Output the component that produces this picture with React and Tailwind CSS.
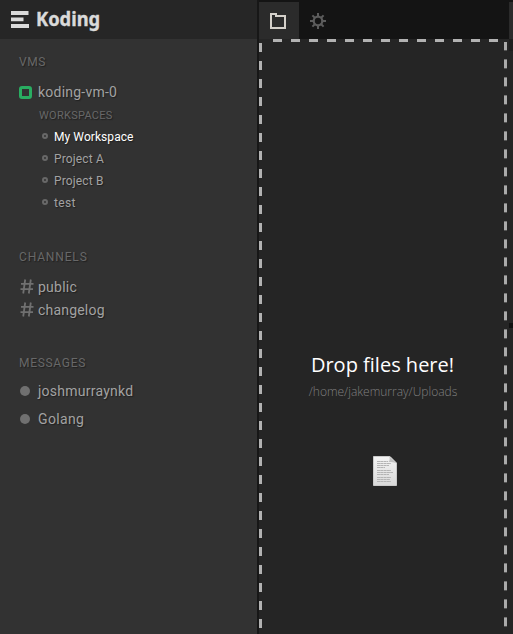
function Heading({ children, className }) {
  return (
    <h2 className={`h-4 whitespace-nowrap pl-[19px] text-[12px] leading-4 text-[#686868] ${className}`}>
      {children}
    </h2>
  );
}

function Workspace({ name, active, tracking }) {
  return (
    <li className="flex h-[22px] items-center pl-[42px]">
      <span className="mb-0.5 size-1.5 shrink-0 rounded-full border-2 border-[#686868]" />
      <span className={`ml-1.5 whitespace-nowrap text-[12px] leading-4 ${tracking} ${active ? "text-white" : "text-[#a2a2a2]"}`}>
        {name}
      </span>
    </li>
  );
}

function Hash() {
  return (
    <svg width="14" height="15" viewBox="0 0 14 15" fill="none" stroke="#707070" strokeWidth="1.8">
      <path d="M5.2.5 3.2 14.5M10.8.5l-2 14M1 4.9h12.5M.5 10.1H13" />
    </svg>
  );
}

function Channel({ name, tracking }) {
  return (
    <li className="flex h-[23px] items-center pl-5">
      <Hash />
      <span className={`ml-1 whitespace-nowrap text-[14px] leading-5 ${tracking}`}>{name}</span>
    </li>
  );
}

function Message({ name, tracking }) {
  return (
    <li className="flex h-7 items-center pl-5">
      <span className="size-2.5 shrink-0 rounded-full bg-[#707070]" />
      <span className={`ml-2 whitespace-nowrap text-[14px] leading-5 ${tracking}`}>{name}</span>
    </li>
  );
}

function Sidebar() {
  return (
    <aside className="flex w-[257px] shrink-0 flex-col bg-[#323232] text-[#a2a2a2] [text-shadow:1px_1px_1px_#202020]">
      <header className="flex h-[39px] shrink-0 bg-[#262626] pl-[11px] text-[#dadada] [text-shadow:none]">
        <svg className="mt-[11px]" width="18" height="17" fill="#dadada">
          <path d="M0 0h17.500v4H0zM0 6.500h12.500v3.700H0zM0 13h18v4H0z" />
        </svg>
        <span className="ml-[7px] mt-[5px] origin-left scale-x-[.915] whitespace-nowrap font-['Noto_Sans',sans-serif] text-[20px] font-bold leading-7 [-webkit-text-stroke:.4px_#dadada]">
          Koding
        </span>
      </header>

      <Heading className="mt-[15px] tracking-[.6px]">VMS</Heading>
      <div className="mt-3 flex h-5 items-center pl-[19px]">
        <span className="size-[13px] shrink-0 rounded-[3px] border-3 border-[#29ad61]" />
        <span className="ml-1.5 whitespace-nowrap text-[14px] leading-5 tracking-[.22px]">koding-vm-0</span>
      </div>
      <h3 className="mt-[6px] h-4 whitespace-nowrap pl-[39px] text-[11px] leading-4 tracking-[.28px] text-[#686868]">WORKSPACES</h3>
      <ul className="mt-[2px]">
        <Workspace name="My Workspace" active tracking="tracking-[.07px]" />
        <Workspace name="Project A" tracking="tracking-[.15px]" />
        <Workspace name="Project B" tracking="tracking-[.15px]" />
        <Workspace name="test" tracking="tracking-[.3px]" />
      </ul>

      <Heading className="mt-[35px] tracking-[.85px]">CHANNELS</Heading>
      <ul className="mt-2.5">
        <Channel name="public" tracking="tracking-[.25px]" />
        <Channel name="changelog" tracking="tracking-[.2px]" />
      </ul>

      <Heading className="mt-[34px] tracking-[.7px]">MESSAGES</Heading>
      <ul className="mt-1.5">
        <Message name="joshmurraynkd" tracking="tracking-[.25px]" />
        <Message name="Golang" tracking="tracking-[.35px]" />
      </ul>
    </aside>
  );
}

function Gear() {
  return (
    <svg width="16" height="16" viewBox="0 0 16 16" fill="none" stroke="#5c5c5c" strokeWidth="2">
      <circle cx="8" cy="8" r="4.300" strokeWidth="2.300" />
      <path d="M8 0v3M8 13v3M0 8h3M13 8h3M2.400 2.400l2.400 2.400M11.200 11.200l2.400 2.400M13.600 2.400l-2.400 2.400M4.800 11.200l-2.400 2.400" />
    </svg>
  );
}

function Document() {
  return (
    <svg width="26" height="32" viewBox="0 0 26 32">
      <defs>
        <linearGradient id="paper" x1="0" y1="0" x2="0" y2="1">
          <stop stopColor="#f4f4f4" />
          <stop offset="1" stopColor="#d9d9d9" />
        </linearGradient>
      </defs>
      <path d="M1.500 1.500H18l6.500 6.500v22.500h-23z" fill="url(#paper)" stroke="#cacaca" />
      <path d="M17 1.500c1 2 1 4-.5 5.500 3 .2 6 0 8 1.500z" fill="#c2c2c2" />
      <path d="M5 6.500h11M5 8.500h14M5 10.500h12M5 12.500h8M5 15.500h14M5 17.500h16M5 19.500h12M5 22.500h14M5 24.500h13M5 26.500h14" stroke="#b4b4b4" strokeDasharray="3 .3" />
    </svg>
  );
}

function FilePanel() {
  return (
    <main className="flex w-[250px] shrink-0 flex-col bg-[#252525]">
      <nav className="flex h-[39px] shrink-0 bg-[#141414] pt-0.5">
        <div className="flex w-10 bg-[#2b2b2b] pl-[11px] pt-[11px]">
          <svg width="16" height="16" viewBox="0 0 16 16" fill="none" stroke="#d4d0ca" strokeWidth="2">
            <path d="M1 15V1h5v2h9v12z" />
          </svg>
        </div>
        <div className="pl-[11px] pt-[11px]"><Gear /></div>
      </nav>
      <div className="ml-3.5 h-[3px] w-[225px] shrink-0 bg-[repeating-linear-gradient(90deg,#b2b2b2_0_9px,transparent_9px_18px)]" />
      <div className="flex min-h-0 flex-1">
        <div className="mt-px w-[3px] bg-[repeating-linear-gradient(180deg,#b2b2b2_0_9px,transparent_9px_18px)]" />
        <section className="flex flex-1 flex-col items-center pt-[309px]">
          <h1 className="mr-px whitespace-nowrap font-['Open_Sans',sans-serif] text-[20px] leading-7 text-white">
            Drop files here!
          </h1>
          <p className="mt-[3px] whitespace-nowrap font-['Open_Sans',sans-serif] text-[12px] font-light leading-5 text-[#808080]">
            /home/jakemurray/Uploads
          </p>
          <div className="ml-1 mt-[53px]"><Document /></div>
        </section>
        <div className="mr-0.5 w-[3px] bg-[repeating-linear-gradient(180deg,#aaaaaa_0_8px,#555555_8px_9px,transparent_9px_17px,#777777_17px_18px)]" />
      </div>
    </main>
  );
}

export default function App() {
  return (
    <div className="flex h-[634px] w-[513px] overflow-hidden bg-[#141414] font-['Roboto',sans-serif]">
      <Sidebar />
      <div className="w-0.5 shrink-0 bg-[#171717]" />
      <FilePanel />
      <div className="flex w-1 shrink-0 flex-col pt-0.5">
        <div className="h-[37px] bg-[#2b2b2b]" />
        <div className="h-3 bg-[#1e1e1e]" />
        <div className="h-[272px] bg-[#252525]" />
        <div className="h-[5px] bg-[#111]" />
        <div className="flex-1 bg-[#252525]" />
      </div>
    </div>
  );
}
